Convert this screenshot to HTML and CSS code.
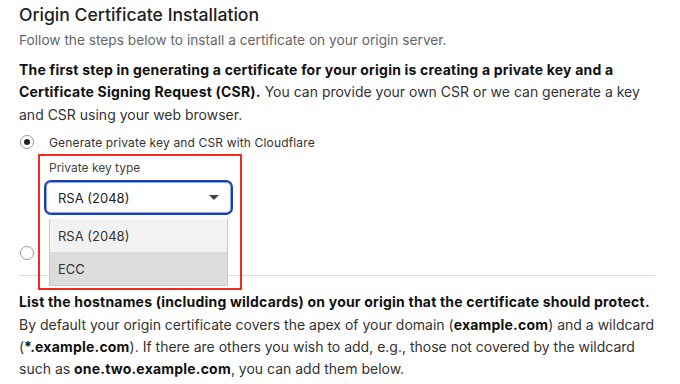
FILE: index.html
```html
<!DOCTYPE html>
<html lang="en">
<head>
    <meta charset="UTF-8">
    <title>Origin Certificate Installation</title>
    <link rel="stylesheet" href="styles.css">
</head>
<body>
    <div class="page">
        <h1>Origin Certificate Installation</h1>
        <p class="sub">Follow the steps below to install a certificate on your origin server.</p>

        <p class="text"><b>The first step in generating a certificate for your origin is creating a private key and a Certificate Signing Request (CSR).</b> You can provide your own CSR or we can generate a key and CSR using your web browser.</p>

        <!-- Opcoes -->
        <div class="radio-row">
            <span class="radio checked"></span>
            <span class="radio-label">Generate private key and CSR with Cloudflare</span>
        </div>

        <div class="field">
            <div class="field-label">Private key type</div>
            <div class="select">
                <span>RSA (2048)</span>
                <span class="caret"></span>
            </div>
            <div class="menu">
                <div class="menu-item">RSA (2048)</div>
                <div class="menu-item active">ECC</div>
            </div>
            <div class="highlight"></div>
        </div>

        <div class="radio-row second">
            <span class="radio"></span>
        </div>

        <hr class="divider">

        <p class="text"><b>List the hostnames (including wildcards) on your origin that the certificate should protect.</b> By default your origin certificate covers the apex of your domain (<b>example.com</b>) and a wildcard (<b>*.example.com</b>). If there are others you wish to add, e.g., those not covered by the wildcard such as <b>one.two.example.com</b>, you can add them below.</p>
    </div>
</body>
</html>
```

FILE: styles.css
```css
/* Geral */
body {
    margin: 0;
    font-family: Inter, "Noto Sans", sans-serif;
    color: #222;
    background: #fff;
}
.page {
    padding: 3px 21px 0 19px;
}
h1 {
    margin: 0;
    font-size: 17.6px;
    font-weight: 500;
    line-height: 24px;
    color: #222;
}
.sub {
    margin: 2px 0 0;
    font-size: 13.7px;
    line-height: 22px;
    color: #666;
}
.text {
    margin: 8px 0 0;
    font-size: 14px;
    line-height: 22.4px;
    color: #333;
}
.text b {
    font-weight: 700;
    letter-spacing: 0.2px;
    color: #111;
}

/* Radios */
.radio-row {
    display: flex;
    align-items: center;
    gap: 15px;
    margin-top: 6px;
    padding-left: 1px;
    height: 20px;
}
.radio {
    width: 14px;
    height: 14px;
    border: 1px solid #999;
    border-radius: 50%;
    box-sizing: border-box;
    display: flex;
    justify-content: center;
    align-items: center;
    background: #fff;
}
.radio.checked::after {
    content: "";
    width: 6px;
    height: 6px;
    border-radius: 50%;
    background: #222;
}
.radio-label {
    font-size: 12px;
    letter-spacing: 0.15px;
    color: #333;
}
.radio-row.second {
    margin-top: 28px;
}

/* Campo do select */
.field {
    position: relative;
    margin-left: 25px;
    width: 189px;
    padding-top: 8px;
}
.field-label {
    font-size: 12px;
    line-height: 16px;
    color: #444;
    padding-left: 5px;
}
.select {
    margin-top: 4px;
    height: 35px;
    box-sizing: border-box;
    border: 2px solid #1c3fa8;
    border-radius: 7px;
    box-shadow: inset 0 0 0 1px #8fa4e6;
    display: flex;
    align-items: center;
    justify-content: space-between;
    padding: 0 12px 0 12px;
    font-size: 13px;
    color: #222;
}
.caret {
    width: 0;
    height: 0;
    border-left: 5px solid transparent;
    border-right: 5px solid transparent;
    border-top: 5px solid #444;
}
.menu {
    position: absolute;
    left: 5px;
    right: 5px;
    top: 67px;
    border: 1px solid #c8c8c8;
    border-top: none;
    background: #f2f2f2;
    z-index: 2;
}
.menu-item {
    height: 33px;
    display: flex;
    align-items: center;
    padding-left: 8px;
    font-size: 13px;
    color: #333;
}
.menu-item.active {
    background: #dcdcdc;
}
.highlight {
    position: absolute;
    left: -6px;
    top: 2px;
    width: 204px;
    height: 136px;
    border: 2px solid #f22b1b;
    box-sizing: border-box;
    z-index: 3;
}

.divider {
    margin: 12px 0 0;
    border: none;
    border-top: 1px solid #ddd;
    width: 636px;
}
.divider + .text {
    margin-top: 15px;
}
```
